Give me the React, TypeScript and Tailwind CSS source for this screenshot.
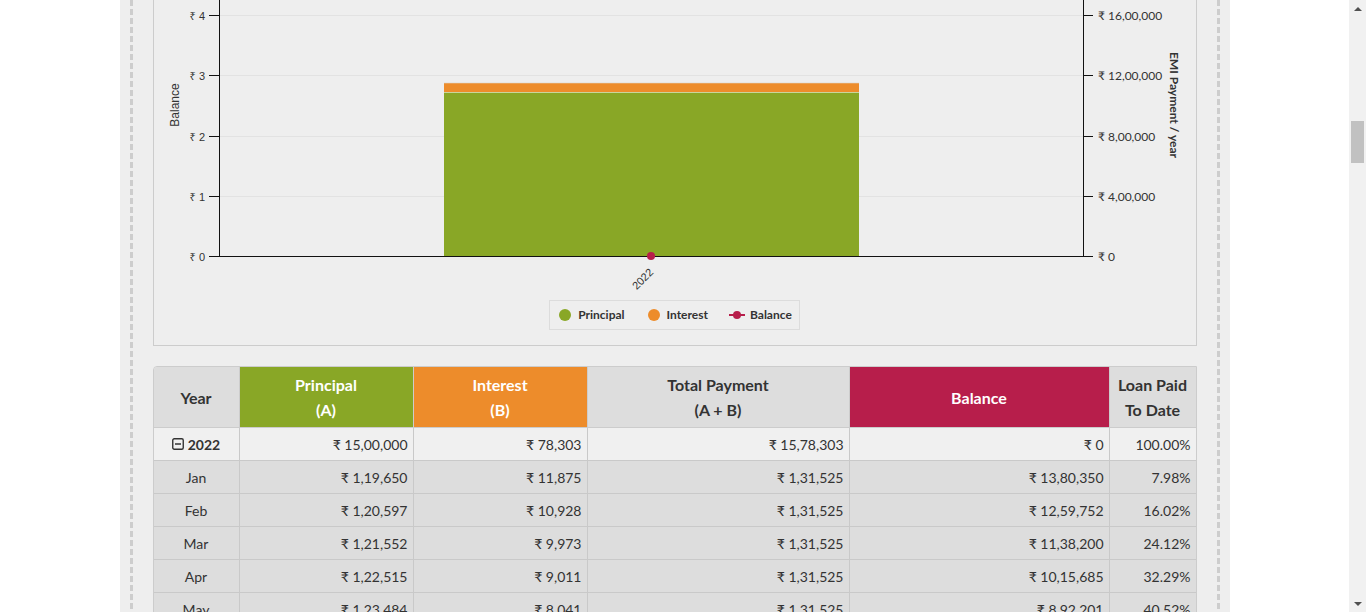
import React from 'react';

const GREEN = '#89a726';
const ORANGE = '#ed8c2b';
const RED = '#b71e4b';

const months = [
  ['Jan', '₹ 1,19,650', '₹ 11,875', '₹ 1,31,525', '₹ 13,80,350', '7.98%'],
  ['Feb', '₹ 1,20,597', '₹ 10,928', '₹ 1,31,525', '₹ 12,59,752', '16.02%'],
  ['Mar', '₹ 1,21,552', '₹ 9,973', '₹ 1,31,525', '₹ 11,38,200', '24.12%'],
  ['Apr', '₹ 1,22,515', '₹ 9,011', '₹ 1,31,525', '₹ 10,15,685', '32.29%'],
  ['May', '₹ 1,23,484', '₹ 8,041', '₹ 1,31,525', '₹ 8,92,201', '40.52%'],
];

const ticks = [0, 1, 2, 3, 4].map((i) => Math.round(256 - i * 60.25) + 0.5);
const leftLabels = ['₹ 0', '₹ 1', '₹ 2', '₹ 3', '₹ 4'];
const rightLabels = ['₹ 0', '₹ 4,00,000', '₹ 8,00,000', '₹ 12,00,000', '₹ 16,00,000'];

const Dashes = () => (
  <div className="w-[3px] shrink-0 bg-[repeating-linear-gradient(to_bottom,#cdcdcd_0px,#cdcdcd_6px,transparent_6px,transparent_9px)]" />
);

const Chart = () => (
  <svg width={1042} height={300} viewBox="154 0 1042 300" className="block">
    {ticks.slice(1).map((y) => (
      <line key={y} x1={220} x2={1083} y1={y} y2={y} stroke="#e2e2e2" strokeWidth={1} />
    ))}

    {/* left axis */}
    <line x1={219.5} x2={219.5} y1={0} y2={257} stroke="#111" strokeWidth={1} />
    {ticks.map((y, i) => (
      <g key={'l' + y}>
        <line x1={209} x2={219} y1={y} y2={y} stroke="#111" strokeWidth={1} />
        <text x={205} y={y + 4} textAnchor="end" fontSize={11} fill="#333" fontFamily="'Liberation Sans', Arial, 'Noto Sans', sans-serif">
          {leftLabels[i]}
        </text>
      </g>
    ))}
    <text
      x={179}
      y={105}
      transform="rotate(-90 179 105)"
      textAnchor="middle"
      fontSize={12}
      fill="#333"
      fontFamily="'Liberation Sans', Arial, 'Noto Sans', sans-serif"
    >
      Balance
    </text>

    {/* right axis */}
    <line x1={1083.5} x2={1083.5} y1={0} y2={257} stroke="#111" strokeWidth={1} />
    {ticks.map((y, i) => (
      <g key={'r' + y}>
        <line x1={1083} x2={1093} y1={y} y2={y} stroke="#111" strokeWidth={1} />
        <text x={1098} y={y + 4} fontSize={12} fill="#333" fontFamily="Lato, 'Noto Sans', sans-serif">
          {rightLabels[i]}
        </text>
      </g>
    ))}
    <text
      x={1170}
      y={105}
      transform="rotate(90 1170 105)"
      textAnchor="middle"
      fontSize={12}
      fontWeight={700}
      fill="#333"
      fontFamily="Lato, 'Noto Sans', sans-serif"
    >
      EMI Payment / year
    </text>

    {/* bar */}
    <rect x={444} y={83} width={415} height={10} fill={ORANGE} />
    <rect x={444} y={92.5} width={415} height={164} fill={GREEN} />
    <line x1={444} x2={859} y1={92.5} y2={92.5} stroke="#c9d59c" strokeWidth={1} />
    <line x1={444} x2={859} y1={83} y2={83} stroke="#dcd3c8" strokeWidth={0.6} />

    {/* x axis */}
    <line x1={219} x2={1084} y1={256.5} y2={256.5} stroke="#111" strokeWidth={1} />
    <circle cx={651} cy={256} r={4} fill={RED} />
    <text
      x={654}
      y={273}
      transform="rotate(-45 654 273)"
      textAnchor="end"
      fontSize={11}
      fill="#333"
      fontFamily="'Liberation Sans', Arial, 'Noto Sans', sans-serif"
    >
      2022
    </text>
  </svg>
);

const Legend = () => (
  <div className="flex justify-center pb-[15px]">
    <div className="flex h-[30px] items-center border border-[#dcdcdc] pl-[9px] pr-[7px] text-[12px] font-bold text-[#333]">
      <span className="h-3 w-3 rounded-full" style={{ background: GREEN }} />
      <span className="ml-[7px]">Principal</span>
      <span className="ml-[23px] h-3 w-3 rounded-full" style={{ background: ORANGE }} />
      <span className="ml-[7px]">Interest</span>
      <svg width={16} height={8} viewBox="0 0 16 8" className="ml-[21px]">
        <line x1={0} x2={16} y1={4} y2={4} stroke={RED} strokeWidth={2} />
        <circle cx={8} cy={4} r={4} fill={RED} />
      </svg>
      <span className="ml-[5px]">Balance</span>
    </div>
  </div>
);

const MinusBox = () => (
  <svg width={12} height={12} viewBox="0 0 12 12" className="mr-[4px]">
    <rect x={0.75} y={0.75} width={10.5} height={10.5} rx={1.5} fill="none" stroke="#333" strokeWidth={1.4} />
    <line x1={3} x2={9} y1={6} y2={6} stroke="#333" strokeWidth={1.4} />
  </svg>
);

const HeadCell = ({ top, bottom, bg, light, last }: { top: string; bottom?: string; bg: string; light?: boolean; last?: boolean }) => (
  <div
    className={`flex h-[61px] flex-col items-center justify-center border-b border-[#ccc] text-[16px] leading-[25px] font-bold ${last ? '' : 'border-r'} ${light ? 'text-white' : 'text-[#333]'}`}
    style={{ background: bg }}
  >
    <span>{top}</span>
    {bottom && <span>{bottom}</span>}
  </div>
);

const Row = ({ cells, bg, bold }: { cells: React.ReactNode[]; bg: string; bold?: boolean }) => (
  <>
    {cells.map((c, i) => (
      <div
        key={i}
        className={`flex h-[33px] items-center border-b border-[#c9c9c9] ${i < 5 ? 'border-r' : ''} ${i === 0 ? 'justify-center' : 'justify-end pr-[5px]'} ${bg} ${bold && i === 0 ? 'font-bold' : ''}`}
      >
        {c}
      </div>
    ))}
  </>
);

export default function App() {
  return (
    <div className="flex h-[612px] w-[1366px] overflow-hidden bg-white font-['Lato','Noto_Sans',sans-serif]">
      <div className="flex min-w-0 flex-1 justify-center">
        <div className="flex h-full w-[1110px] shrink-0 bg-[#eeeeee] px-[10px]">
          <Dashes />
          <div className="flex-1 px-5">
            <div className="border-x border-b border-[#cccccc] bg-[#eeeeee]">
              <Chart />
              <Legend />
            </div>

            <div className="mt-5 grid grid-cols-[86px_174px_174px_262px_260px_1fr] overflow-hidden rounded-tl-[4px] border border-[#cccccc] text-[14px] text-[#333]">
              <HeadCell top="Year" bg="#dddddd" />
              <HeadCell top="Principal" bottom="(A)" bg={GREEN} light />
              <HeadCell top="Interest" bottom="(B)" bg={ORANGE} light />
              <HeadCell top="Total Payment" bottom="(A + B)" bg="#dddddd" />
              <HeadCell top="Balance" bg={RED} light />
              <HeadCell top="Loan Paid" bottom="To Date" bg="#dddddd" last />

              <Row
                bg="bg-[#f0f0f0]"
                bold
                cells={[
                  <span key="y" className="flex items-center">
                    <MinusBox />
                    2022
                  </span>,
                  '₹ 15,00,000',
                  '₹ 78,303',
                  '₹ 15,78,303',
                  '₹ 0',
                  '100.00%',
                ]}
              />
              {months.map((m) => (
                <Row key={m[0]} bg="bg-[#dddddd]" cells={m} />
              ))}
            </div>
          </div>
          <Dashes />
        </div>
      </div>

      <div className="flex w-[17px] shrink-0 flex-col bg-[#f1f1f1]">
        <div className="flex h-[17px] items-center justify-center">
          <div className="h-0 w-0 border-x-[4px] border-b-[4px] border-x-transparent border-b-[#505050]" />
        </div>
        <div className="h-[104px]" />
        <div className="mx-[2px] h-[42px] bg-[#c1c1c1]" />
        <div className="flex-1" />
        <div className="flex h-[17px] items-center justify-center">
          <div className="h-0 w-0 border-x-[4px] border-t-[4px] border-x-transparent border-t-[#505050]" />
        </div>
      </div>
    </div>
  );
}
